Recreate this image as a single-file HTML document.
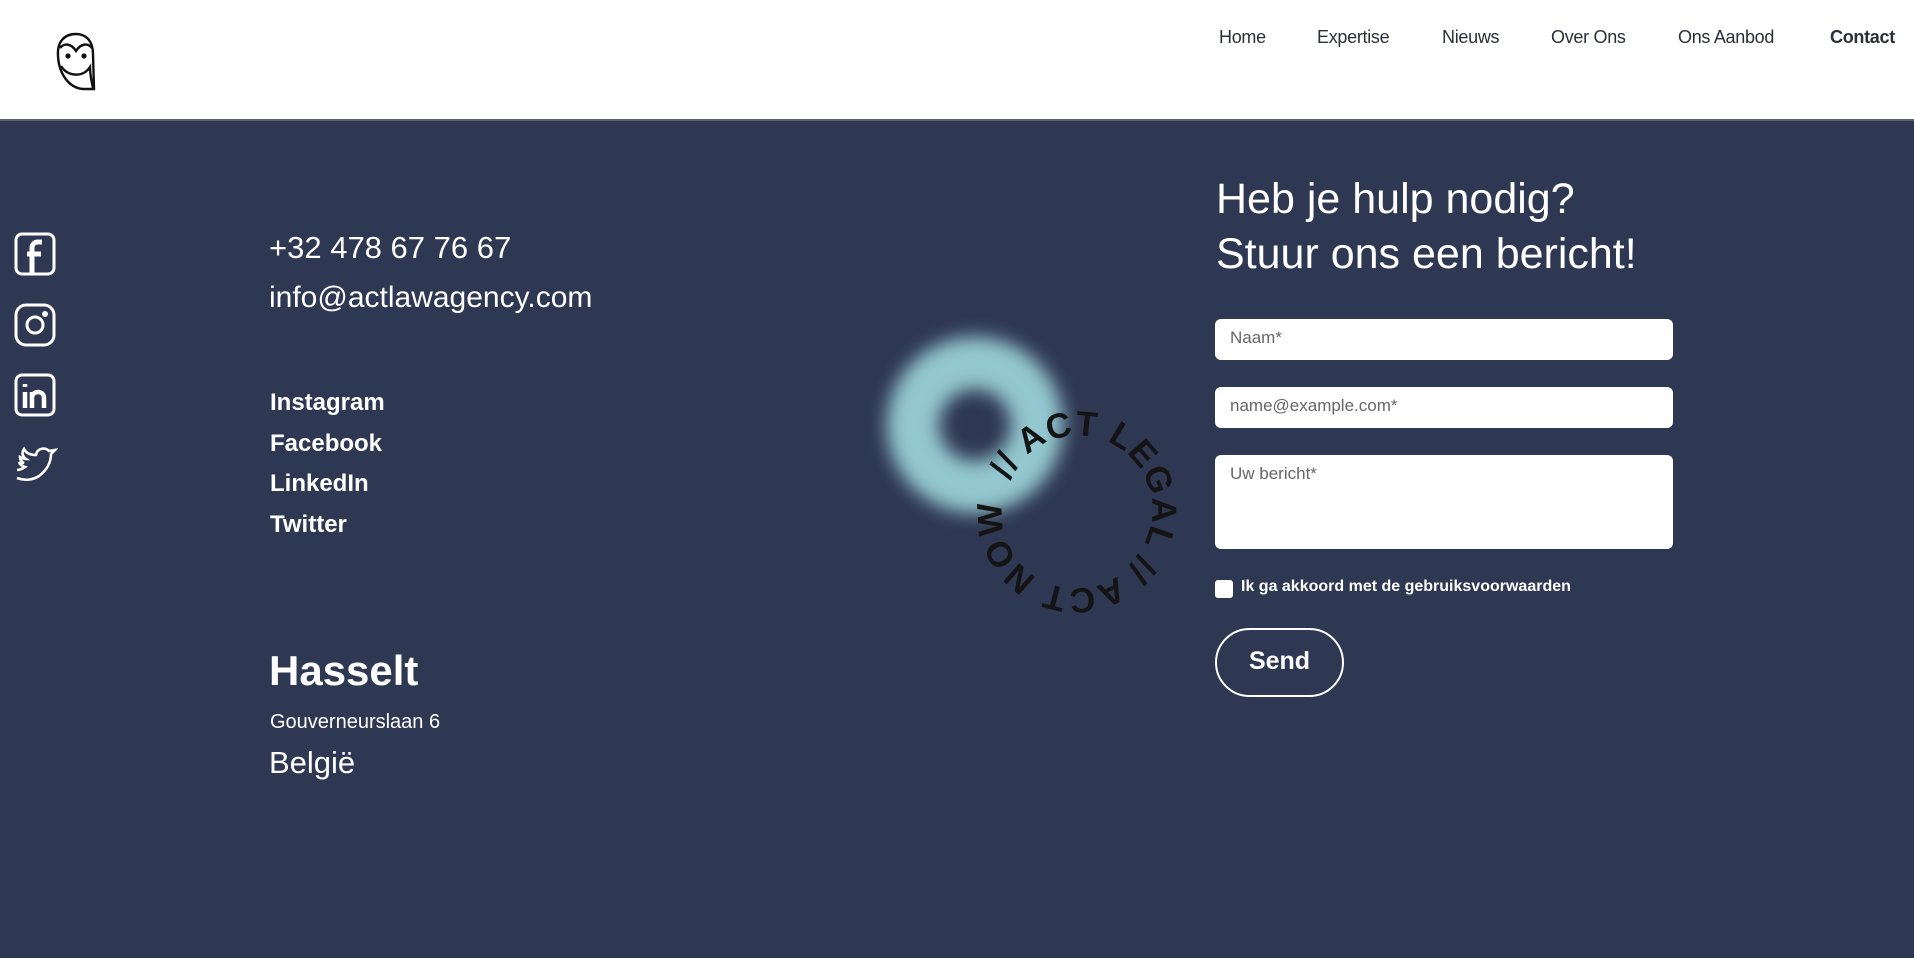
<!DOCTYPE html>
<html><head><meta charset="utf-8"><style>
*{margin:0;padding:0;box-sizing:border-box}
body{width:1914px;height:958px;overflow:hidden;background:#2f3853;font-family:"Liberation Sans",sans-serif;color:#fff;position:relative}
.hdr{position:absolute;left:0;top:0;width:1914px;height:121px;background:#fff;border-bottom:2px solid #5d6373}
.nav a{position:absolute;top:27px;font-size:18px;color:#2b2f3a;text-decoration:none;letter-spacing:-0.3px}
.abs{position:absolute;white-space:nowrap}
.inp{position:absolute;left:1215px;width:458px;background:#fff;border-radius:6px;color:#666;font-size:17px;padding:9px 15px}
</style></head><body>
<div class="hdr">
<svg style="position:absolute;left:55px;top:32px" width="42" height="60" viewBox="0 0 42 60" fill="none" stroke="#111" stroke-width="2.4">
<path d="M21 2C9 2 2 10 3 24C4 42 14 56 28 57L39 57L38 22C38 9 31 2 21 2Z"/>
<path d="M5 16C9 11 16 11 21 19C26 11 33 11 37 16"/>
<path d="M6 34C10 41 18 44 26 42C30 41 33 38 35 35C35 44 37 51 38 56"/>
<circle cx="13" cy="24" r="2.6" fill="#111" stroke="none"/><circle cx="29" cy="24" r="2.6" fill="#111" stroke="none"/>
</svg>
<div class="nav">
<a style="left:1219px">Home</a><a style="left:1317px">Expertise</a><a style="left:1442px">Nieuws</a><a style="left:1551px">Over Ons</a><a style="left:1678px">Ons Aanbod</a><a style="left:1830px;font-weight:bold">Contact</a>
</div>
</div>

<svg class="abs" style="left:14px;top:232px" width="44" height="256" viewBox="0 0 44 256" fill="none" stroke="#fff" stroke-width="3">
<rect x="2" y="2" width="38" height="40" rx="6"/>
<path d="M28 10h-4c-4 0-6 3-6 6v26M13 22h14" stroke-width="5"/>
<rect x="2" y="73" width="38" height="40" rx="10"/>
<circle cx="21" cy="93" r="8"/><circle cx="31" cy="82" r="1.5" fill="#fff"/>
<rect x="2" y="143" width="38" height="40" rx="6"/>
<path d="M11 160v16M11 152v3M18 160v16M18 166c0-8 12-8 12 0v10" stroke-width="4.5"/>
<path d="M3 246c8 3 16 2 22-2c8-6 12-14 12-22l4-4l-6 1c-4-4-12-3-13 4c-6 0-10-2-12-6c-3 4-1 8 2 10c-3 0-4-1-6-2c0 3 2 5 4 6c-3 0-4 0-5-1c1 3 3 4 6 5c-3 2-6 3-8 3" stroke-width="2.6"/>
</svg>

<div class="abs" style="left:269px;top:230px;font-size:31px">+32 478 67 76 67</div>
<div class="abs" style="left:269px;top:281px;font-size:30px">info@actlawagency.com</div>
<div class="abs" style="left:270px;top:383px;font-size:24px;font-weight:bold;line-height:40.5px">Instagram<br>Facebook<br>LinkedIn<br>Twitter</div>
<div class="abs" style="left:269px;top:647px;font-size:42px;font-weight:bold">Hasselt</div>
<div class="abs" style="left:270px;top:711px;font-size:20px">Gouverneurslaan 6</div>
<div class="abs" style="left:269px;top:745px;font-size:31px">België</div>

<div class="abs" style="left:887px;top:337px;width:176px;height:176px;border-radius:50%;border:52px solid #94c8d0;filter:blur(9px)"></div>
<svg class="abs" style="left:0;top:0" width="1914" height="958">
<defs><path id="c" d="M1010 480.7A74 74 0 1 1 1144 543.3A74 74 0 1 1 1010 480.7"/></defs>
<text font-family="Liberation Sans,sans-serif" font-weight="bold" font-size="35" fill="#141414"><textPath href="#c" textLength="452" lengthAdjust="spacing">// ACT LEGAL // ACT NOW</textPath></text>
</svg>

<div class="abs" style="left:1216px;top:172px;font-size:43px;line-height:55px">Heb je hulp nodig?<br>Stuur ons een bericht!</div>
<div class="inp" style="top:319px;height:41px">Naam*</div>
<div class="inp" style="top:387px;height:41px">name@example.com*</div>
<div class="inp" style="top:455px;height:94px">Uw bericht*</div>
<div class="abs" style="left:1215px;top:580px;width:18px;height:18px;background:#fff;border-radius:3px"></div>
<div class="abs" style="left:1241px;top:578px;font-size:16px;font-weight:bold">Ik ga akkoord met de gebruiksvoorwaarden</div>
<div class="abs" style="left:1215px;top:628px;width:129px;height:69px;border:2.5px solid #fff;border-radius:35px;font-size:25px;font-weight:bold;text-align:center;line-height:62px">Send</div>
</body></html>
